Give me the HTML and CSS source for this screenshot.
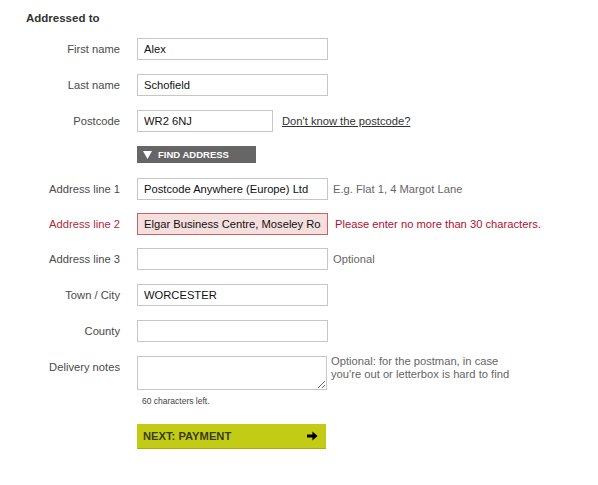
FILE: index.html
```html
<!DOCTYPE html>
<html>
<head>
<meta charset="utf-8">
<link rel="stylesheet" href="styles.css">
</head>
<body>
<div class="form">
  <h2 class="heading">Addressed to</h2>
  <div class="rows">
    <div class="row"><label class="label">First name</label><div class="field"><input class="input" value="Alex"></div></div>
    <div class="row"><label class="label">Last name</label><div class="field"><input class="input" value="Schofield"></div></div>
    <div class="row"><label class="label">Postcode</label><div class="field"><input class="input short" value="WR2 6NJ"><a class="link" href="#">Don't know the postcode?</a></div></div>
    <div class="row row-btn"><span class="label"></span><div class="field"><button class="find"><svg class="tri" width="9" height="8" viewBox="0 0 9 8"><path d="M0 0H9L4.5 8Z" fill="#fff"/></svg>FIND ADDRESS</button></div></div>
    <div class="row row-a1"><label class="label">Address line 1</label><div class="field"><input class="input" value="Postcode Anywhere (Europe) Ltd"><span class="hint">E.g. Flat 1, 4 Margot Lane</span></div></div>
    <div class="row row-a2 error"><label class="label">Address line 2</label><div class="field"><input class="input" value="Elgar Business Centre, Moseley Road"><span class="hint err">Please enter no more than 30 characters.</span></div></div>
    <div class="row row-a3"><label class="label">Address line 3</label><div class="field"><input class="input" value=""><span class="hint">Optional</span></div></div>
    <div class="row"><label class="label">Town / City</label><div class="field"><input class="input" value="WORCESTER"></div></div>
    <div class="row"><label class="label">County</label><div class="field"><input class="input" value=""></div></div>
    <div class="row row-notes"><label class="label">Delivery notes</label><div class="field notes"><div class="notes-col"><textarea class="textarea"></textarea><div class="count">60 characters left.</div></div><span class="hint multi">Optional: for the postman, in case<br>you're out or letterbox is hard to find</span></div></div>
    <div class="row row-next"><span class="label"></span><div class="field"><button class="next"><span>NEXT: PAYMENT</span><svg width="11" height="10" viewBox="0 0 11 10"><path d="M0 3.6H5.4V0.4L10.6 5L5.4 9.6V6.4H0Z" fill="#000"/></svg></button></div></div>
  </div>
</div>
</body>
</html>
```
FILE: styles.css
```css
* { box-sizing: border-box; }
body {
  margin: 0;
  background: #fff;
  font-family: "Liberation Sans", Arial, sans-serif;
  font-size: 11.2px;
  color: #444;
}
.form {
  padding: 11px 0 0 26px;
}
.heading {
  margin: 0;
  font-size: 11.5px;
  line-height: 14px;
  font-weight: bold;
  color: #333;
}
.rows {
  display: flex;
  flex-direction: column;
  margin-top: 13px;
}
.row {
  display: grid;
  grid-template-columns: 94px 1fr;
  column-gap: 17px;
  align-items: start;
  margin-bottom: 14px;
}
.label {
  text-align: right;
  line-height: 22px;
  color: #4a4a4a;
}
.field {
  display: flex;
  align-items: center;
}
.input {
  width: 191px;
  height: 22px;
  border: 1px solid #c6c6c6;
  padding: 0 6px;
  font-family: "Liberation Sans", Arial, sans-serif;
  font-size: 11.2px;
  color: #111;
  background: #fff;
  outline: none;
}
.input.short { width: 136px; }
.link {
  margin-left: 9px;
  color: #333;
  text-decoration: underline;
}
.row-btn { margin-bottom: 15px; }
.find {
  display: flex;
  align-items: center;
  width: 119px;
  height: 17px;
  border: 0;
  padding: 0 0 0 6px;
  background: #666;
  color: #fff;
  font-family: "Liberation Sans", Arial, sans-serif;
  font-size: 9.5px;
  font-weight: bold;
}
.tri { margin-right: 6px; }
.hint {
  margin-left: 5px;
  color: #666;
}
.err { color: #b01030; margin-left: 7px; }
.error .label { color: #b0283a; }
.error .input {
  background: #f5dede;
  border-color: #c46464;
}
.row-a1 { margin-bottom: 13px; }
.row-a2 { margin-bottom: 13px; }
.row-a3 { margin-bottom: 14px; }
.notes { align-items: flex-start; }
.notes-col { display: flex; flex-direction: column; }
.textarea {
  display: block;
  width: 190px;
  height: 34px;
  border: 1px solid #c6c6c6;
  padding: 2px 4px;
  font-family: "Liberation Sans", Arial, sans-serif;
  font-size: 11.2px;
  outline: none;
}
.count {
  margin-top: 6px;
  margin-left: 5px;
  font-size: 8.5px;
  color: #444;
}
.multi {
  margin-left: 4px;
  line-height: 13px;
  margin-top: -1px;
}
.row-notes { margin-bottom: 18px; }
.next {
  display: flex;
  align-items: center;
  justify-content: space-between;
  width: 189px;
  height: 25px;
  border: 0;
  border-bottom: 1px solid #a8ad12;
  padding: 0 8px 0 6px;
  background: #c3cc15;
  color: #3c3c1c;
  font-family: "Liberation Sans", Arial, sans-serif;
  font-size: 11.2px;
  font-weight: bold;
}
```
